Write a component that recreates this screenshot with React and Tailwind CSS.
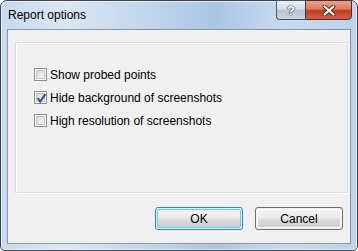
import React from 'react';

const OPTIONS = [
  { label: 'Show probed points', checked: false },
  { label: 'Hide background of screenshots', checked: true },
  { label: 'High resolution of screenshots', checked: false },
];

function CheckBox({ checked }) {
  return (
    <div className="w-[13px] h-[13px] border border-[#8f8f8f] bg-white p-px shrink-0">
      <div className="relative w-full h-full border border-[#c4c4c4] bg-[linear-gradient(135deg,#d9d9d9,#f6f6f6)]">
        {checked && (
          <svg className="absolute left-[-1px] top-[-1px]" width="11" height="11" viewBox="0 0 11 11">
            <path d="M1.8 5.2 L4.2 8.6 L9.4 1.2" fill="none" stroke="#3a5591" strokeWidth="2.2" />
          </svg>
        )}
      </div>
    </div>
  );
}

function Button({ label, primary }) {
  return (
    <div
      className={
        'w-[88px] h-[23px] rounded-[3px] border p-px ' +
        (primary ? 'border-[#3c7fb1]' : 'border-[#707070]')
      }
    >
      <div
        className={
          'w-full h-full rounded-[2px] flex items-center justify-center text-[12px] text-black bg-[linear-gradient(180deg,#f2f2f2_0%,#ebebeb_48%,#dddddd_52%,#cfcfcf_100%)] ' +
          (primary ? 'border border-[#48d8fb]' : 'border border-[#fbfbfb]')
        }
      >
        {label}
      </div>
    </div>
  );
}

export default function App() {
  return (
    <div className="w-[358px] h-[251px] bg-white font-['Liberation_Sans',Arial,sans-serif]">
      {/* window frame */}
      <div className="w-full h-full rounded-t-[7px] rounded-b-[5px] border border-[#3d4450] bg-[linear-gradient(90deg,#c6daee_0%,#dae7f4_18%,#bcd3ea_45%,#aac6e4_60%,#c8dbef_80%,#bad2ea_100%)] flex flex-col px-[6px] pb-[6px] shadow-[inset_0_0_0_1px_rgba(255,255,255,0.6)]">
        {/* title bar */}
        <div className="h-[28px] flex items-start justify-between">
          <span className="pt-[6px] pl-[1px] text-[12px] text-black leading-[16px]">Report options</span>
          <div className="flex mr-[-1px] mt-[-1px]">
            <div className="w-[29px] h-[20px] border border-[#4a5566] border-r-0 rounded-bl-[4px] bg-[linear-gradient(180deg,#e9eef4_0%,#d5dde7_45%,#b8c4d3_50%,#c9d5e2_100%)] flex items-center justify-center">
              <span className="text-[13px] font-bold text-white leading-none [text-shadow:0_0_1px_#2b3440,0_0_1px_#2b3440,0_0_1px_#2b3440]">?</span>
            </div>
            <div className="w-[47px] h-[20px] border border-[#4a3030] rounded-br-[4px] bg-[linear-gradient(180deg,#eaa08c_0%,#dc7c64_45%,#c53a20_52%,#d2604a_100%)] flex items-center justify-center">
              <svg width="14" height="11" viewBox="0 0 14 11">
                <path d="M2.5 1.5 L11.5 9.5 M11.5 1.5 L2.5 9.5" stroke="#5a2a22" strokeWidth="4" strokeLinecap="round" />
                <path d="M2.5 1.5 L11.5 9.5 M11.5 1.5 L2.5 9.5" stroke="#ffffff" strokeWidth="2.2" strokeLinecap="round" />
              </svg>
            </div>
          </div>
        </div>

        {/* client area */}
        <div className="flex-1 border border-[#8a96a3] bg-[#f0f0f0] flex flex-col">
          <div className="mt-[12px] ml-[7px] mr-[2px] h-[151px] border border-[#d5dfe5] shadow-[1px_1px_0_#ffffff,inset_1px_1px_0_#ffffff] flex flex-col pt-[25px] pl-[18px] gap-[10px]">
            {OPTIONS.map((o) => (
              <div key={o.label} className="flex items-center gap-[3px] h-[13px]">
                <CheckBox checked={o.checked} />
                <span className="text-[12px] leading-[16px] text-black whitespace-nowrap">{o.label}</span>
              </div>
            ))}
          </div>
          <div className="flex justify-end gap-[12px] mt-[14px] mr-[7px]">
            <Button label="OK" primary />
            <Button label="Cancel" />
          </div>
        </div>
      </div>
    </div>
  );
}
